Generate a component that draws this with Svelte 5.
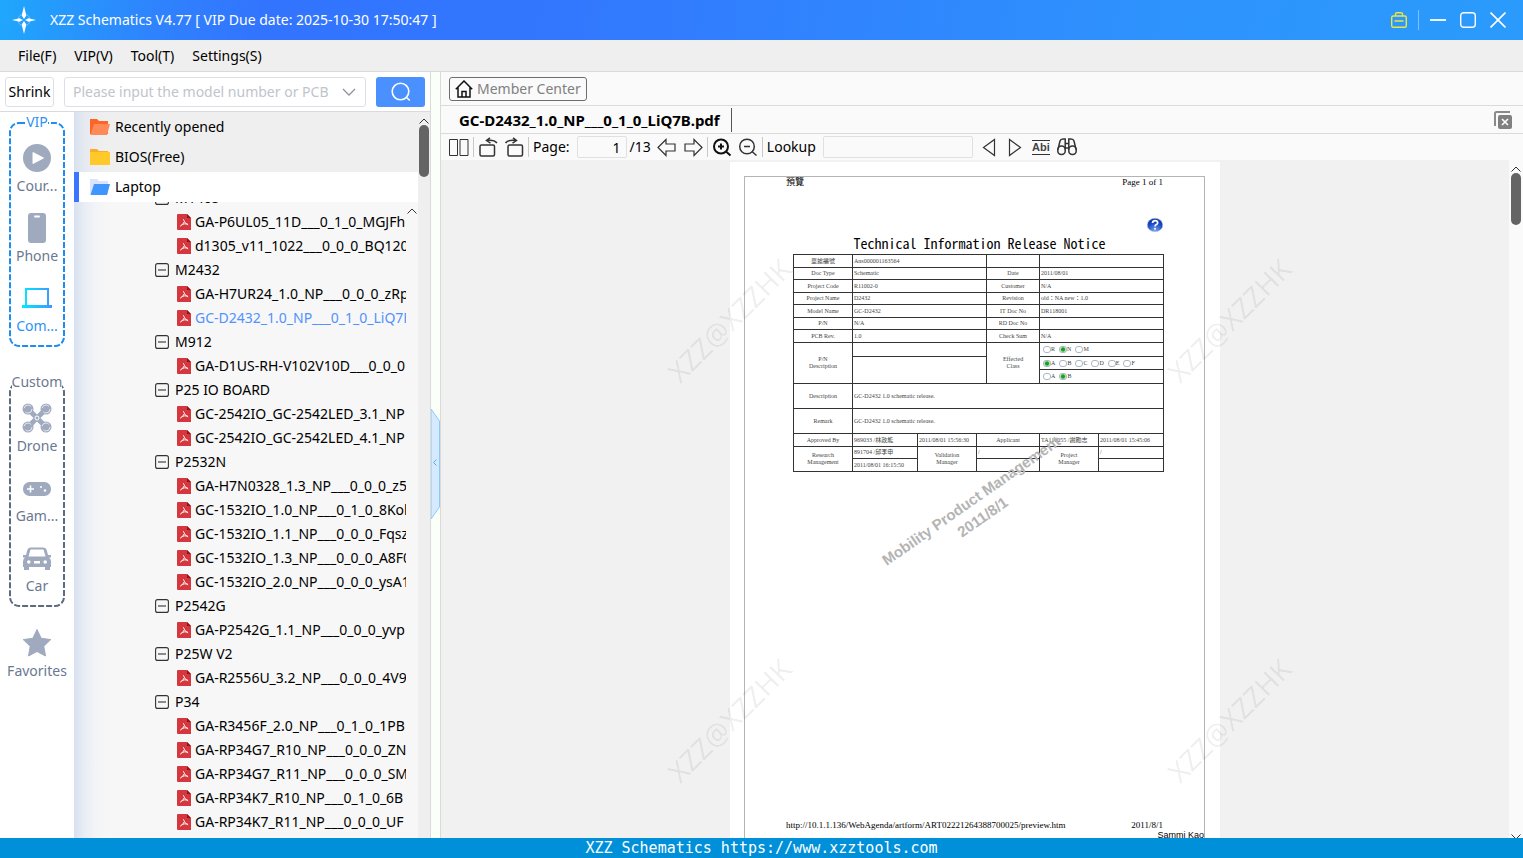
<script>
	let keyword = $state('');
	let lookup = $state('');
	let page = $state('1');
	let activeFile = $state('GC-D2432_1.0_NP___0_1_0_LiQ7B');

	const menus = ['File(F)', 'VIP(V)', 'Tool(T)', 'Settings(S)'];

	const navGroups = [
		{
			title: 'VIP',
			vip: true,
			items: [
				{ icon: 'play', label: 'Cour...' },
				{ icon: 'phone', label: 'Phone' },
				{ icon: 'computer', label: 'Com...', active: true }
			]
		},
		{
			title: 'Custom',
			vip: false,
			items: [
				{ icon: 'drone', label: 'Drone' },
				{ icon: 'game', label: 'Gam...' },
				{ icon: 'car', label: 'Car' }
			]
		}
	];

	const tree = [
		{ name: 'M1405', files: ['GA-P6UL05_11D___0_1_0_MGJFh', 'd1305_v11_1022___0_0_0_BQ120'] },
		{ name: 'M2432', files: ['GA-H7UR24_1.0_NP___0_0_0_zRp', 'GC-D2432_1.0_NP___0_1_0_LiQ7B'] },
		{ name: 'M912', files: ['GA-D1US-RH-V102V10D___0_0_0'] },
		{ name: 'P25 IO BOARD', files: ['GC-2542IO_GC-2542LED_3.1_NP', 'GC-2542IO_GC-2542LED_4.1_NP'] },
		{
			name: 'P2532N',
			files: [
				'GA-H7N0328_1.3_NP___0_0_0_z5',
				'GC-1532IO_1.0_NP___0_1_0_8Kol',
				'GC-1532IO_1.1_NP___0_0_0_Fqsz',
				'GC-1532IO_1.3_NP___0_0_0_A8F0',
				'GC-1532IO_2.0_NP___0_0_0_ysA1'
			]
		},
		{ name: 'P2542G', files: ['GA-P2542G_1.1_NP___0_0_0_yvp'] },
		{ name: 'P25W V2', files: ['GA-R2556U_3.2_NP___0_0_0_4V9'] },
		{
			name: 'P34',
			files: [
				'GA-R3456F_2.0_NP___0_1_0_1PB',
				'GA-RP34G7_R10_NP___0_0_0_ZN',
				'GA-RP34G7_R11_NP___0_0_0_SM',
				'GA-RP34K7_R10_NP___0_1_0_6B',
				'GA-RP34K7_R11_NP___0_0_0_UF'
			]
		}
	];

	const infoRows = [
		['單據編號', 'Ans000001163564', '', ''],
		['Doc Type', 'Schematic', 'Date', '2011/08/01'],
		['Project Code', 'R11002-0', 'Customer', 'N/A'],
		['Project Name', 'D2432', 'Revision', 'old：NA new：1.0'],
		['Model Name', 'GC-D2432', 'IT Doc No', 'DR118001'],
		['P/N', 'N/A', 'RD Doc No', ''],
		['PCB Rev.', '1.0', 'Check Sum', 'N/A']
	];

	const classes = [
		{ name: 'stage', options: ['R', 'N', 'M'], checked: 'N' },
		{ name: 'grade', options: ['A', 'B', 'C', 'D', 'E', 'F'], checked: 'A' },
		{ name: 'level', options: ['A', 'B'], checked: 'B' }
	];
</script>

{#snippet radios(row)}
	<div class="radios">
		{#each row.options as opt}
			<label><input type="radio" name={row.name} checked={opt === row.checked} />{opt}</label>
		{/each}
	</div>
{/snippet}

{#snippet navIcon(name)}
	<svg class="nav-icon" viewBox="0 0 30 30" fill="#a0aabf">
		{#if name === 'play'}
			<circle cx="15" cy="15" r="14" />
			<path d="M11 9.5v11l10.500-5.500z" fill="#fff" stroke="#fff" stroke-linejoin="round" />
		{:else if name === 'phone'}
			<rect x="6" y="0" width="18" height="30" rx="3" />
			<rect x="12" y="2.500" width="6" height="2" rx="1" fill="#fff" />
		{:else if name === 'computer'}
			<defs>
				<linearGradient id="screen" x1="0" x2="1"><stop offset="0" stop-color="#00eaff" /><stop offset="1" stop-color="#3f97ff" /></linearGradient>
			</defs>
			<path d="M3 5h24v17h3v3H0v-3h3zM5 7v15h20V7z" fill="url(#screen)" fill-rule="evenodd" />
		{:else if name === 'drone'}
			<g stroke="#a0aabf" stroke-width="5"><path d="M8 8l14 14M22 8L8 22" /></g>
			{#each [[6, 6], [24, 6], [6, 24], [24, 24]] as [x, y]}
				<circle cx={x} cy={y} r="5.500" />
				<circle cx={x} cy={y} r="4" fill="none" stroke="#fff" stroke-width=".7" stroke-dasharray="9 4" />
			{/each}
			<circle cx="15" cy="15" r="2" fill="none" stroke="#fff" />
		{:else if name === 'game'}
			<rect x="1" y="9" width="28" height="14" rx="6.500" />
			<path d="M5 16h7M8.500 12.500v7" stroke="#fff" stroke-width="1.500" />
			<circle cx="19" cy="14" r="1" fill="#fff" /><circle cx="23" cy="17.500" r="1.200" fill="#fff" />
		{:else if name === 'car'}
			<path d="M8.500 4.500h13q2.500 0 3.200 2.500l1.300 5h3v2.500h-2q2 1.500 2 4v5.500h-1V27h-5v-3H7v3H2v-3H1v-5.500q0-2.500 2-4H1V12h3l1.300-5q.7-2.500 3.200-2.500zM8.500 6.500L6.500 13.500h17L21.500 6.500z" fill-rule="evenodd" />
			<path d="M5 19a1.800 1.800 0 1 0 3.600 0a1.800 1.800 0 1 0-3.600 0M21.400 19a1.800 1.800 0 1 0 3.600 0a1.800 1.800 0 1 0-3.600 0M12 18h6v2.500h-6z" fill="#fff" />
		{:else}
			<path d="M15 1.500l4.200 8.800 9.600 1.300-7 6.700 1.700 9.700L15 23.500 6.500 28l1.700-9.700-7-6.700 9.600-1.300z" stroke="#a0aabf" stroke-linejoin="round" />
		{/if}
	</svg>
{/snippet}

{#snippet folder(back, front, open)}
	<svg class="folder" viewBox="0 0 20 16">
		<path d="M0 0h7l2 2h9v13H0z" fill={back} />
		{#if open}
			<path d="M4 5h16l-3 11H0.500z" fill={front} />
		{:else}
			<path d="M0 3h20v13H0z" fill={front} />
		{/if}
	</svg>
{/snippet}

<div class="app">
	<header class="title-bar">
		<svg class="logo" viewBox="0 0 24 30" fill="#fff">
			<circle cx="12" cy="15" r="6" fill="none" stroke="#9fd0ff" stroke-opacity=".6" />
			<path d="M12 1l2.300 9.500L12 14l-2.300-3.500zM12 29l2.300-9.500L12 16l-2.300 3.500zM0 15l7.500-1.700L11 15l-3.500 1.700zM24 15l-7.500-1.700L13 15l3.500 1.700z" />
		</svg>
		<span class="title">XZZ Schematics V4.77 [ VIP Due date: 2025-10-30 17:50:47 ]</span>
		<button class="win" aria-label="Toolbox">
			<svg viewBox="0 0 16 16" stroke="#f0e53c" fill="none" stroke-width="1.400"><rect x=".7" y="4" width="14.600" height="11.300" rx="1.500" /><path d="M4.500 4V2q0-1.300 1.400-1.300h4.200q1.400 0 1.400 1.300v2M3.500 9h9" /></svg>
		</button>
		<span class="win-sep"></span>
		<button class="win" aria-label="Minimize">
			<svg viewBox="0 0 16 16" stroke="#fff" fill="none" stroke-width="1.800"><path d="M0 8h16" /></svg>
		</button>
		<button class="win" aria-label="Maximize">
			<svg viewBox="0 0 16 16" stroke="#fff" fill="none" stroke-width="1.400"><rect x=".7" y=".7" width="14.600" height="14.600" rx="3" /></svg>
		</button>
		<button class="win" aria-label="Close">
			<svg viewBox="0 0 16 16" stroke="#fff" fill="none" stroke-width="1.600"><path d="M.5.5l15 15M15.500.5l-15 15" /></svg>
		</button>
	</header>

	<nav class="menu-bar">
		{#each menus as menu}
			<button>{menu}</button>
		{/each}
	</nav>

	<main>
		<section class="left">
			<div class="search-row">
				<button class="shrink">Shrink</button>
				<div class="combo">
					<input type="text" aria-label="Model number or PCB" placeholder="Please input the model number or PCB" bind:value={keyword} />
					<button aria-label="Search history">
						<svg viewBox="0 0 14 8" fill="none" stroke="#909399" stroke-width="1.300"><path d="M1 1l6 6 6-6" /></svg>
					</button>
				</div>
				<button class="search" aria-label="Search">
					<svg viewBox="0 0 20 20" fill="none" stroke="#fff" stroke-width="1.600"><circle cx="9.500" cy="9.500" r="8.300" /><path d="M15.500 15.500l3.300 3" /></svg>
				</button>
			</div>

			<div class="browser">
				<aside class="side-nav">
					{#each navGroups as group}
						<div class="group" class:vip={group.vip}>
							<svg class="frame"><rect x="1" y="1" rx="9" /></svg>
							<span class="group-title">{group.title}</span>
							{#each group.items as item}
								<button class="nav-item" class:active={item.active}>
									{@render navIcon(item.icon)}
									{item.label}
								</button>
							{/each}
						</div>
					{/each}
					<button class="nav-item">
						{@render navIcon('star')}
						Favorites
					</button>
				</aside>

				<div class="files">
					<div class="categories">
						<button>{@render folder('#fb6526', '#ff8a57', true)}Recently opened</button>
						<button>{@render folder('#fdab2c', '#ffc929', false)}BIOS(Free)</button>
						<button class="selected">{@render folder('#dbe4fb', '#3f96ff', true)}Laptop</button>
						<div class="tree-wrap">
							<ul class="tree">
								{#each tree as node}
									<li>
										<button class="node">
											<svg viewBox="0 0 14 14" fill="none" stroke="#333" stroke-width="1.100"><rect x=".6" y=".6" width="12.800" height="12.800" rx="2" /><path d="M3 7h8" /></svg>
											{node.name}
										</button>
										{#each node.files as file}
											<button class="file" class:current={file === activeFile} onclick={() => (activeFile = file)}>
												<svg viewBox="0 0 14 16">
													<path d="M1 0h9l4 4v12H1q-1 0-1-1V1q0-1 1-1z" fill="#d4373e" /><path d="M10 0l4 4h-4z" fill="#8f1519" />
													<path d="M6.300 5.200q.9 3.800 4.800 5.800M7.100 8q-1 3-4 4.200M4.700 10.600q2.500-1.200 6-.6" fill="none" stroke="#fff" stroke-width=".9" />
												</svg>
												<span>{file}</span>
											</button>
										{/each}
									</li>
								{/each}
							</ul>
							<svg class="arrow" viewBox="0 0 10 6"><path d="M.5 5.500L5 1l4.500 4.500" /></svg>
						</div>
					</div>
					<div class="scroll">
						<svg class="arrow" viewBox="0 0 10 6"><path d="M.5 5.500L5 1l4.500 4.500" /></svg>
						<div class="thumb"></div>
					</div>
				</div>
			</div>
		</section>

		<button class="splitter" aria-label="Collapse panel">
			<svg viewBox="0 0 9 110" fill="none">
				<path d="M0 0l8.500 12v86L0 110z" fill="#d6eaff" stroke="#8fc8f6" />
				<path d="M5.500 50.500L2.500 53.500l3 3" stroke="#59aef0" />
			</svg>
		</button>

		<section class="right">
			<div class="member-row">
				<button class="member">
					<svg viewBox="0 0 18 18" fill="none" stroke="#111" stroke-width="1.500"><path d="M.8 9.200L9 1l8.200 8.200M3 7.500V17h12V7.500M7 17v-5.500h4V17" /></svg>
					Member Center
				</button>
			</div>

			<div class="tab-row">
				<button class="tab">{activeFile}.pdf</button>
				<button class="close-all" aria-label="Close all">
					<svg viewBox="0 0 18 18"><path d="M1 15V2.500Q1 1 2.500 1H16" fill="none" stroke="#8a8a8a" stroke-width="2" /><rect x="4" y="4" width="14" height="14" rx="2" fill="#808080" /><path d="M8 8l6 6M14 8l-6 6" stroke="#fff" stroke-width="1.600" /></svg>
				</button>
			</div>

			<div class="toolbar">
				<button aria-label="Two pages"><svg viewBox="0 0 20 20"><path d="M.5 2.500h8v16h-8zM11 2.500h8v16h-8z" /></svg></button>
				<i></i>
				<button aria-label="Rotate left"><svg viewBox="0 0 20 20" stroke-width="1.500"><rect x="2" y="8" width="14.500" height="11" rx="1.500" /><path d="M19 6Q16 2.500 9 3.500M12 .8L8.500 3.500l4 2.700" /></svg></button>
				<button aria-label="Rotate right"><svg viewBox="0 0 20 20" stroke-width="1.500"><rect x="4" y="8" width="14.500" height="11" rx="1.500" /><path d="M1.500 6Q4 2.500 12 3.500M9 .8l3.500 2.700-4 2.700" /></svg></button>
				<i></i>
				<label for="page">Page:</label>
				<input id="page" class="page-input" type="text" bind:value={page} />
				<span class="total">/13</span>
				<button aria-label="Previous page"><svg viewBox="0 0 20 20" stroke-width="1.200"><path d="M1 10.500L9 2.500V7h9v7H9v4.500z" /></svg></button>
				<button aria-label="Next page"><svg viewBox="0 0 20 20" stroke-width="1.200"><path d="M19 10.500L11 2.500V7H2v7h9v4.500z" /></svg></button>
				<i></i>
				<button class="bold" aria-label="Zoom in"><svg viewBox="0 0 20 20"><circle cx="9" cy="9.500" r="7" /><path d="M14 14.500l4.500 4M9 6.500v6M6 9.500h6" /></svg></button>
				<button aria-label="Zoom out"><svg viewBox="0 0 20 20" stroke-width="1.500"><circle cx="9" cy="9.500" r="7.300" /><path d="M14 14.500l4.500 4M6 9.500h6" /></svg></button>
				<i></i>
				<label for="lookup">Lookup</label>
				<input id="lookup" class="lookup-input" type="text" bind:value={lookup} />
				<button aria-label="Find previous"><svg viewBox="0 0 20 20" stroke-width="1.200"><path d="M15.500 2.500v16L4.500 10.500z" /></svg></button>
				<button aria-label="Find next"><svg viewBox="0 0 20 20" stroke-width="1.200"><path d="M4.500 2.500v16L15.500 10.500z" /></svg></button>
				<button class="abi">Abi</button>
				<button aria-label="Find"><svg viewBox="0 0 20 20" stroke-width="1.500"><rect x=".8" y="9" width="7.400" height="8.500" rx="3.500" /><rect x="11.800" y="9" width="7.400" height="8.500" rx="3.500" /><path d="M1 12.500L3 4q.6-2 3-2h2.200v10.500M19 12.500L17 4q-.6-2-3-2h-2.200v10.500M8.200 6.500h3.600M8.200 11h3.600" /></svg></button>
			</div>

			<div class="viewer">
				<div class="canvas">
					<div class="sheet">
						<div class="paper">
							<div class="page-head"><span>預覽</span><span>Page 1 of 1</span></div>
							<svg class="help" viewBox="0 0 16 16">
								<defs><radialGradient id="ball" cx=".5" cy=".9" r=".9"><stop offset="0" stop-color="#6fa5f5" /><stop offset=".6" stop-color="#1c48c4" /><stop offset="1" stop-color="#12309c" /></radialGradient></defs>
								<ellipse cx="8" cy="8" rx="7.800" ry="6.700" fill="url(#ball)" stroke="#b9c6e6" stroke-width=".6" />
								<path d="M5.500 6q.3-2.300 2.700-2.300T10.700 6q0 1-1.300 1.600T8 9.500" fill="none" stroke="#fff" stroke-width="1.700" /><circle cx="8" cy="11.800" r="1" fill="#fff" />
							</svg>
							<h1>Technical Information Release Notice</h1>
							<table>
								<colgroup>
									<col class="c59" /><col class="c65" /><col class="c59" /><col class="c10" /><col class="c53" /><col class="c59" /><col class="c65" />
								</colgroup>
								<tbody>
									{#each infoRows as row}
										<tr>
											<th>{row[0]}</th>
											<td colspan="3">{row[1]}</td>
											<th>{row[2]}</th>
											<td colspan="2">{row[3]}</td>
										</tr>
									{/each}
									<tr>
										<th rowspan="3">P/N<br />Description</th>
										<td colspan="3"></td>
										<th rowspan="3">Effected<br />Class</th>
										<td colspan="2">{@render radios(classes[0])}</td>
									</tr>
									<tr>
										<td colspan="3" rowspan="2"></td>
										<td colspan="2">{@render radios(classes[1])}</td>
									</tr>
									<tr>
										<td colspan="2">{@render radios(classes[2])}</td>
									</tr>
									<tr class="tall">
										<th>Description</th>
										<td colspan="6">GC-D2432 1.0 schematic release.</td>
									</tr>
									<tr class="tall">
										<th>Remark</th>
										<td colspan="6">GC-D2432 1.0 schematic release.</td>
									</tr>
									<tr>
										<th>Approved By</th>
										<td>969033 /林政能</td>
										<td>2011/08/01 15:56:30</td>
										<th colspan="2">Applicant</th>
										<td>TA110055 /謝勵志</td>
										<td>2011/08/01 15:45:06</td>
									</tr>
									<tr>
										<th rowspan="2">Research<br />Management</th>
										<td>891704 /邱李申</td>
										<th rowspan="2">Validation<br />Manager</th>
										<td colspan="2">/</td>
										<th rowspan="2">Project<br />Manager</th>
										<td>/</td>
									</tr>
									<tr>
										<td>2011/08/01 16:15:50</td>
										<td colspan="2"></td>
										<td></td>
									</tr>
								</tbody>
							</table>
							<p class="stamp">Mobility Product Management<br />2011/8/1</p>
							<div class="page-foot"><span>http://10.1.1.136/WebAgenda/artform/ART02221264388700025/preview.htm</span><span>2011/8/1</span></div>
							<p class="signer">Sammi Kao</p>
						</div>
					</div>
					<div class="watermarks" aria-hidden="true">
						{#each [0, 1, 2, 3] as n (n)}
							<span>XZZ@XZZHK</span>
						{/each}
					</div>
				</div>
				<div class="scroll">
					<svg class="arrow" viewBox="0 0 10 6"><path d="M.5 5.500L5 1l4.500 4.500" /></svg>
					<div class="thumb"></div>
					<svg class="arrow down" viewBox="0 0 10 6"><path d="M.5.5L5 5 9.500.5" /></svg>
				</div>
			</div>
		</section>
	</main>

	<footer>XZZ Schematics https://www.xzztools.com</footer>
</div>

<style>
	:global(body) {
		margin: 0;
	}

	.app {
		height: 100vh;
		display: flex;
		flex-direction: column;
		overflow: hidden;
		font-family: 'Noto Sans', 'Open Sans', 'Noto Sans CJK TC', sans-serif;
		font-size: 14px;
		line-height: 20px;
		color: #000;
	}

	.app *,
	.app {
		box-sizing: border-box;
	}

	button,
	input {
		font: inherit;
		color: inherit;
		margin: 0;
	}

	button {
		padding: 0;
		border: none;
		background: none;
		cursor: pointer;
		white-space: nowrap;
	}

	svg {
		display: block;
		flex: none;
	}

	/* title and menu */
	.title-bar {
		flex: none;
		height: 40px;
		display: flex;
		align-items: center;
		gap: 14px;
		padding: 0 17px 0 12px;
		color: #fff;
		background: linear-gradient(100deg, #1fa7fc 0, #2f82fd 160px, #3274fe 260px, #3276fe 35%, #2e92fd 75%, #2a9bfc 100%);
	}

	.logo {
		width: 24px;
		height: 30px;
	}

	.title {
		flex: 1;
	}

	.win svg {
		width: 16px;
		height: 16px;
	}

	.win-sep {
		width: 1px;
		height: 20px;
		background: #7fc0ff;
		margin: 0 -3px;
	}

	.menu-bar {
		flex: none;
		height: 32px;
		display: flex;
		align-items: center;
		gap: 18px;
		padding-left: 18px;
		background: #efefef;
		border-bottom: 1px solid #dadada;
	}

	main {
		flex: 1;
		min-height: 0;
		display: flex;
	}

	/* left panel */
	.left {
		flex: none;
		width: 431px;
		display: flex;
		flex-direction: column;
		border-right: 1px solid #dadada;
	}

	.search-row {
		flex: none;
		height: 40px;
		display: flex;
		align-items: center;
		gap: 10px;
		padding: 0 5px;
		border-bottom: 1px solid #dadada;
	}

	.shrink {
		width: 49px;
		height: 30px;
		border: 1px solid #dcdfe6;
		border-radius: 3px;
	}

	.combo {
		flex: 1;
		min-width: 0;
		height: 30px;
		display: flex;
		align-items: center;
		padding: 0 9px 0 8px;
		border: 1px solid #dcdfe6;
		border-radius: 3px;
	}

	.combo input {
		flex: 1;
		min-width: 0;
		padding: 0;
		margin-right: 8px;
		border: none;
		outline: none;
	}

	.combo input::placeholder {
		color: #c0c4cc;
	}

	.combo svg {
		width: 14px;
		height: 8px;
	}

	.search {
		width: 49px;
		height: 30px;
		display: flex;
		align-items: center;
		justify-content: center;
		border-radius: 3px;
		background: #4a90fe;
	}

	.search svg {
		width: 20px;
		height: 20px;
	}

	.browser {
		flex: 1;
		min-height: 0;
		display: flex;
	}

	.side-nav {
		flex: none;
		width: 74px;
		display: flex;
		flex-direction: column;
		align-items: center;
		padding-top: 10px;
		color: #6b7890;
	}

	.group {
		position: relative;
		width: 56px;
		height: 225px;
		margin-bottom: 35px;
		display: flex;
		flex-direction: column;
		align-items: center;
	}

	.group + .nav-item {
		margin-top: -25px;
	}

	.frame {
		position: absolute;
		inset: 0;
		width: 100%;
		height: 100%;
	}

	.frame rect {
		width: calc(100% - 2px);
		height: calc(100% - 2px);
		fill: none;
		stroke: #5d6b80;
		stroke-width: 2;
		stroke-dasharray: 6 2;
	}

	.vip .frame rect {
		stroke: #1d8df2;
	}

	.group-title {
		position: relative;
		height: 20px;
		margin-top: -10px;
		line-height: 20px;
		background: #fff;
	}

	.vip .group-title {
		color: #2d92f5;
	}

	.nav-item {
		position: relative;
		height: 70px;
		display: flex;
		flex-direction: column;
		align-items: center;
		gap: 3px;
		padding-top: 11px;
	}

	.nav-item.active {
		color: #2d92f5;
	}

	.nav-icon {
		width: 30px;
		height: 30px;
	}

	.files {
		flex: 1;
		min-width: 0;
		display: flex;
		background: #efefef;
	}

	.categories {
		flex: 1;
		min-width: 0;
		display: flex;
		flex-direction: column;
		background: linear-gradient(90deg, #d8e1f0, #e5e9f0 10px, #ecedf0 20px, #efefef 34px);
	}

	.categories > button {
		flex: none;
		height: 30px;
		display: flex;
		align-items: center;
		gap: 5px;
		padding-left: 16px;
	}

	.categories > .selected {
		padding-left: 11px;
		border-left: 5px solid #3a74ff;
		background: #fff;
	}

	.folder {
		width: 20px;
		height: 16px;
	}

	.tree-wrap {
		flex: 1;
		min-height: 0;
		display: flex;
		overflow: hidden;
		background: linear-gradient(90deg, #d8e1f0, #e8edf5 10px, #f3f4f7 22px, #f7f7f7 36px);
	}

	.tree-wrap .arrow {
		margin: 6px 1px 0;
	}

	/* scrolled so that the first row is mostly hidden */
	.tree {
		flex: 1;
		min-width: 0;
		margin: -16px 0 0;
		padding: 0;
		list-style: none;
		overflow: hidden;
	}

	.tree button {
		height: 24px;
		width: 100%;
		display: flex;
		align-items: center;
		overflow: hidden;
	}

	.node {
		gap: 6px;
		padding-left: 81px;
	}

	.node svg {
		width: 14px;
		height: 14px;
	}

	.file {
		gap: 4px;
		padding-left: 103px;
	}

	.file svg {
		width: 14px;
		height: 16px;
	}

	.file.current {
		color: #5292ff;
	}

	.scroll {
		flex: none;
		width: 12px;
		display: flex;
		flex-direction: column;
		align-items: center;
		gap: 1px;
		padding-top: 6px;
	}

	.thumb {
		width: 10px;
		height: 52px;
		border-radius: 5px;
		background: #646464;
	}

	.arrow {
		width: 10px;
		height: 6px;
		fill: none;
		stroke: #333;
	}

	.arrow.down {
		margin-top: auto;
		margin-bottom: -2px;
	}

	.splitter {
		flex: none;
		width: 9px;
		display: flex;
		align-items: center;
		background: #fafffa;
	}

	.splitter svg {
		width: 9px;
		height: 110px;
		margin-top: 18px;
	}

	/* right panel */
	.right {
		flex: 1;
		min-width: 0;
		display: flex;
		flex-direction: column;
		border-left: 1px solid #dadada;
		background: #fafafa;
	}

	.member-row {
		flex: none;
		height: 34px;
		display: flex;
		align-items: center;
		padding-left: 8px;
		border-bottom: 1px solid #dadada;
	}

	.member {
		height: 24px;
		display: flex;
		align-items: center;
		gap: 4px;
		padding: 0 5px;
		border: 1px solid #6e6e6e;
		border-radius: 3px;
		color: #808080;
	}

	.member svg {
		width: 18px;
		height: 18px;
	}

	.tab-row {
		flex: none;
		height: 28px;
		display: flex;
		align-items: center;
		justify-content: space-between;
		padding-right: 11px;
		border-bottom: 1px solid #dadada;
	}

	.tab {
		height: 24px;
		padding: 0 11px 0 18px;
		border-right: 1px solid #555;
		font-size: 15px;
		font-weight: 700;
	}

	.close-all svg {
		width: 18px;
		height: 18px;
	}

	.toolbar {
		flex: none;
		height: 26px;
		display: flex;
		align-items: center;
		gap: 6px;
		padding-left: 8px;
	}

	.toolbar label {
		margin-right: 1px;
	}

	.toolbar svg {
		width: 20px;
		height: 20px;
		fill: none;
		stroke: #333;
	}

	.toolbar .bold svg {
		stroke: #111;
		stroke-width: 2;
	}

	.toolbar i {
		width: 1px;
		height: 20px;
		margin: 0 -2px;
		background: #c8c8c8;
	}

	.toolbar input {
		height: 22px;
		padding: 0 5px;
		border: 1px solid #e0e0e0;
		border-radius: 2px;
		background: #fafafa;
	}

	.toolbar .page-input {
		width: 50px;
		text-align: right;
	}

	.total {
		margin-left: -3px;
	}

	.toolbar .lookup-input {
		width: 150px;
	}

	.abi {
		width: 18px;
		margin: 0 1px;
		border-top: 1px solid #333;
		border-bottom: 1px solid #333;
		font-family: 'Liberation Sans', Arial, sans-serif;
		font-size: 11px;
		line-height: 13px;
		font-weight: 700;
		color: #444;
	}

	.viewer {
		flex: 1;
		min-height: 0;
		display: flex;
		overflow: hidden;
	}

	.viewer .scroll {
		width: 14px;
	}

	.canvas {
		position: relative;
		flex: 1;
		min-width: 0;
		display: flex;
		justify-content: center;
		overflow: hidden;
		background: #f1f1f1;
	}

	.sheet {
		flex: none;
		width: 490px;
		height: 720px;
		margin-top: 2px;
		padding: 14px 15px 0 14px;
		background: #fff;
	}

	.paper {
		position: relative;
		height: 100%;
		padding: 0 41px;
		border: 1px solid #b4b4b4;
		font-family: 'Liberation Serif', 'Noto Sans CJK TC', serif;
	}

	.page-head,
	.page-foot {
		display: flex;
		justify-content: space-between;
		font-size: 9px;
		line-height: 10px;
	}

	.help {
		width: 16px;
		height: 16px;
		margin: 30px 0 0 auto;
	}

	h1 {
		margin: 0 0 1px;
		padding-left: 10px;
		text-align: center;
		font-family: 'Noto Sans Mono CJK TC', 'Noto Sans', monospace;
		font-size: 14px;
		line-height: 20px;
		font-weight: 400;
	}

	table {
		width: 371px;
		margin-left: 7px;
		table-layout: fixed;
		border-collapse: collapse;
		font-size: 6px;
		line-height: 7px;
		color: #444;
	}

	.c59 {
		width: 59px;
	}
	.c65 {
		width: 65px;
	}
	.c10 {
		width: 10px;
	}
	.c53 {
		width: 53px;
	}

	tr {
		height: 13px;
	}

	tr:nth-child(even) {
		height: 12px;
	}

	tr:nth-child(8),
	tr:nth-child(10) {
		height: 14px;
	}

	tr:nth-child(n).tall {
		height: 25px;
	}

	th,
	td {
		padding: 0 1px;
		border: 1px solid #333;
		font-weight: 400;
		text-align: left;
		white-space: nowrap;
	}

	th {
		text-align: center;
	}

	.radios {
		display: flex;
		gap: 4px;
		padding-left: 2px;
	}

	.radios label {
		display: flex;
		align-items: center;
	}

	.radios input {
		appearance: none;
		width: 8px;
		height: 7px;
		border: 1px solid #a9b9c9;
		border-radius: 3px;
		background: #fff;
	}

	.radios input:checked {
		background: radial-gradient(circle, #17a317 40%, #cfeccf 70%);
	}

	.stamp {
		position: absolute;
		top: 312px;
		left: 50%;
		width: 240px;
		margin: 0 0 0 -118px;
		text-align: center;
		font: 700 15px/20px 'Liberation Sans', Arial, sans-serif;
		color: #b4b4b4;
		transform: rotate(-35deg);
	}

	.page-foot {
		position: absolute;
		top: 643px;
		left: 41px;
		right: 41px;
	}

	.signer {
		position: absolute;
		top: 653px;
		right: 0;
		margin: 0;
		font: 9px/10px 'Liberation Sans', Arial, sans-serif;
	}

	.watermarks {
		position: absolute;
		top: 60px;
		left: 50%;
		display: grid;
		grid-template-columns: 500px 500px;
		grid-auto-rows: 400px;
		width: 1000px;
		margin-left: -496px;
		pointer-events: none;
	}

	.watermarks span {
		place-self: start center;
		margin-top: 82px;
		font-size: 28px;
		line-height: 36px;
		font-weight: 400;
		color: rgba(0, 0, 0, 0.07);
		transform: rotate(-45deg);
	}

	footer {
		flex: none;
		height: 20px;
		background: #0090da;
		color: #fff;
		text-align: center;
		font-family: 'DejaVu Sans Mono', monospace;
		font-size: 15px;
	}
</style>
